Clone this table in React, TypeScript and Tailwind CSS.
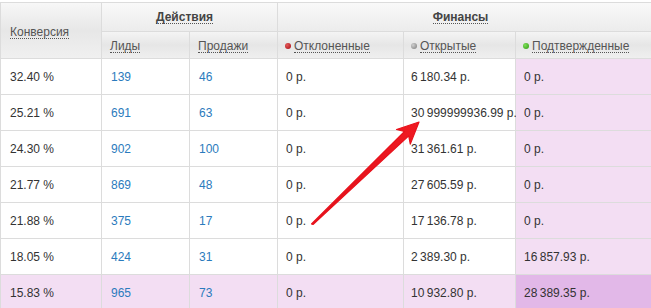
import React from 'react';

type Row = {
  conv: string;
  leads: string;
  sales: string;
  rejected: string;
  open: string;
  confirmed: string;
  highlight?: boolean;
};

const T = '\u2009';

const rows: Row[] = [
  { conv: '32.40 %', leads: '139', sales: '46', rejected: '0 р.', open: `6${T}180.34 р.`, confirmed: '0 р.' },
  { conv: '25.21 %', leads: '691', sales: '63', rejected: '0 р.', open: `30${T}999999936.99 р.`, confirmed: '0 р.' },
  { conv: '24.30 %', leads: '902', sales: '100', rejected: '0 р.', open: `31${T}361.61 р.`, confirmed: '0 р.' },
  { conv: '21.77 %', leads: '869', sales: '48', rejected: '0 р.', open: `27${T}605.59 р.`, confirmed: '0 р.' },
  { conv: '21.88 %', leads: '375', sales: '17', rejected: '0 р.', open: `17${T}136.78 р.`, confirmed: '0 р.' },
  { conv: '18.05 %', leads: '424', sales: '31', rejected: '0 р.', open: `2${T}389.30 р.`, confirmed: `16${T}857.93 р.` },
  { conv: '15.83 %', leads: '965', sales: '73', rejected: '0 р.', open: `10${T}932.80 р.`, confirmed: `28${T}389.35 р.`, highlight: true },
];

const Dotted = ({ children, className = '' }: { children: React.ReactNode; className?: string }) => (
  <span className={`inline-block leading-[12px] border-b border-dotted border-[#555] ${className}`}>{children}</span>
);

const Dot = ({ color }: { color: string }) => (
  <span className={`inline-block w-[6px] h-[6px] rounded-full mr-[3px] mb-[1px] ${color}`} />
);

const head1 = 'bg-linear-to-b from-[#f9f9f9] to-[#ececec]';
const head2 = 'bg-linear-to-b from-[#f4f4f4] via-[#e6e6e6] to-[#efefef]';

export default function App() {
  return (
    <div
      className="relative w-[651px] h-[308px] overflow-hidden bg-white pt-[2px] text-[12px] text-[#333]"
      style={{ fontFamily: '"Liberation Sans", Arial, sans-serif' }}
    >
      <div className="grid grid-cols-[101px_88px_88px_126px_112px_136px] border-l border-t border-[#dcdcdc]">
        {/* header */}
        <div className={`row-span-2 flex items-center pl-[9px] pt-[3px] border-r border-b border-[#dcdcdc] text-[#555] bg-linear-to-b from-[#f7f7f7] via-[#e7e7e7] to-[#f0f0f0]`}>
          <Dotted>Конверсия</Dotted>
        </div>
        <div className={`col-span-2 h-[29px] flex items-center justify-center border-r border-b border-[#dcdcdc] font-bold text-[#444] ${head1}`}>
          <Dotted className="-translate-x-[5px]">Действия</Dotted>
        </div>
        <div className={`col-span-3 h-[29px] flex items-center justify-center border-r border-b border-[#dcdcdc] font-bold text-[#444] ${head1}`}>
          <Dotted className="-translate-x-[4px]">Финансы</Dotted>
        </div>

        <div className={`h-[27px] flex items-center pl-2 pt-[3px] border-r border-b border-[#dcdcdc] text-[#555] ${head2}`}>
          <Dotted>Лиды</Dotted>
        </div>
        <div className={`h-[27px] flex items-center pl-2 pt-[3px] border-r border-b border-[#dcdcdc] text-[#555] ${head2}`}>
          <Dotted>Продажи</Dotted>
        </div>
        <div className={`h-[27px] flex items-center pl-[7px] pt-[3px] border-r border-b border-[#dcdcdc] text-[#555] ${head2}`}>
          <Dot color="bg-[radial-gradient(circle_at_35%_35%,#e25a5a,#a80a12)]" />
          <Dotted>Отклоненные</Dotted>
        </div>
        <div className={`h-[27px] flex items-center pl-[7px] pt-[3px] border-r border-b border-[#dcdcdc] text-[#555] ${head2}`}>
          <Dot color="bg-[radial-gradient(circle_at_35%_35%,#d0d0d0,#7a7a7a)]" />
          <Dotted>Открытые</Dotted>
        </div>
        <div className={`h-[27px] flex items-center pl-[7px] pt-[3px] border-r border-b border-[#dcdcdc] text-[#555] ${head2}`}>
          <Dot color="bg-[radial-gradient(circle_at_35%_35%,#7ee05a,#2e9a10)]" />
          <Dotted>Подтвержденные</Dotted>
        </div>

        {/* body */}
        {rows.map((r, i) => {
          const bg = r.highlight ? 'bg-[#f3def3]' : 'bg-white';
          const cell = 'h-[36px] flex items-center whitespace-nowrap border-r border-b border-[#dcdcdc]';
          return (
            <React.Fragment key={i}>
              <div className={`${cell} ${bg} pl-[9px]`}>{r.conv}</div>
              <div className={`${cell} ${bg} pl-[9px] text-[#2b7bbd]`}>{r.leads}</div>
              <div className={`${cell} ${bg} pl-[9px] text-[#2b7bbd]`}>{r.sales}</div>
              <div className={`${cell} ${bg} pl-2`}>{r.rejected}</div>
              <div className={`${cell} ${bg} pl-[7px]`}>{r.open}</div>
              <div className={`${cell} pl-2 ${r.highlight ? 'bg-[#e2b8e8]' : 'bg-[#f3def3]'}`}>{r.confirmed}</div>
            </React.Fragment>
          );
        })}
      </div>

      <svg className="absolute inset-0 pointer-events-none" width="651" height="308" viewBox="0 0 651 308">
        <defs>
          <linearGradient id="arrowFill" x1="0" y1="1" x2="1" y2="0">
            <stop offset="0" stopColor="#e0101a" />
            <stop offset="1" stopColor="#f01a22" />
          </linearGradient>
        </defs>
        <polygon
          points="311.5,224 404.5,131.5 396.5,129.5 419,122 410.3,144.1 408.7,135.9 313,224.5"
          fill="url(#arrowFill)"
          stroke="#e8121c"
          strokeWidth="1.2"
          strokeLinejoin="round"
        />
      </svg>
    </div>
  );
}
